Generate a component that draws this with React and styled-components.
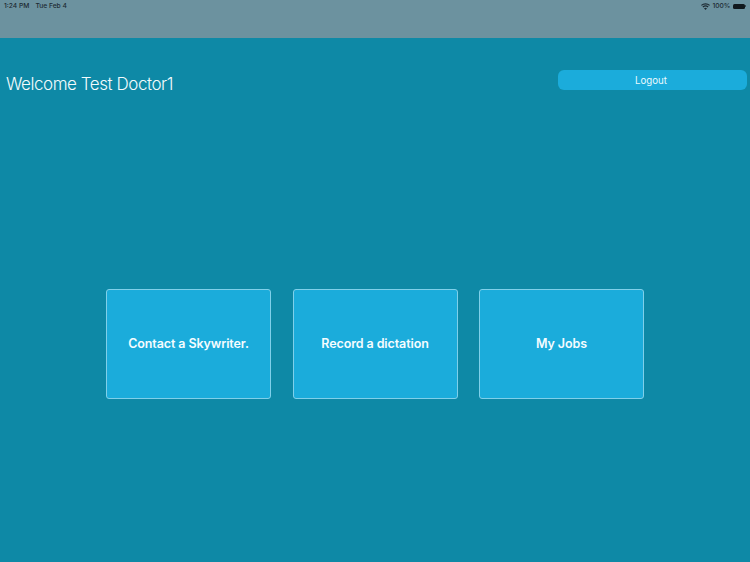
import React from "react";
import styled, { createGlobalStyle } from "styled-components";

const Global = createGlobalStyle`
  html, body { margin: 0; padding: 0; background: #0e89a6; }
  * { box-sizing: border-box; }
`;

const Page = styled.div`
  width: 750px;
  height: 562px;
  overflow: hidden;
  display: flex;
  flex-direction: column;
  background: #0e89a6;
  font-family: Inter, "Liberation Sans", sans-serif;
  color: #fff;
`;

const StatusBar = styled.div`
  height: 38px;
  flex: none;
  background: #6c929f;
  color: #1d2b33;
  font-size: 6.7px;
  font-weight: 500;
  display: flex;
  justify-content: space-between;
  align-items: flex-start;
  padding: 2px 4px 0 4px;
  line-height: 8px;
`;

const StatusGroup = styled.div`
  display: flex;
  align-items: center;
  gap: ${p => p.$gap}px;
`;

const Battery = styled.div`
  position: relative;
  width: 12px;
  height: 5px;
  margin-right: 1px;
  border-radius: 1.5px;
  background: #10181d;

  &::after {
    content: "";
    position: absolute;
    top: 1.5px;
    right: -1px;
    width: 1px;
    height: 2px;
    background: #3a4a52;
  }
`;

const Header = styled.div`
  display: flex;
  justify-content: space-between;
  align-items: flex-start;
  padding: 32px 3px 0 6px;
`;

const Welcome = styled.div`
  font-size: 17px;
  font-weight: 300;
  line-height: 28px;
  letter-spacing: -0.45px;
  color: #f2fbfd;
`;

const Logout = styled.div`
  width: 189px;
  height: 20px;
  padding: 1px 3px 0 0;
  border-radius: 6px;
  background: #1bacdb;
  color: #eafaff;
  font-size: 9.7px;
  font-weight: 400;
  display: flex;
  align-items: center;
  justify-content: center;
`;

const Tiles = styled.div`
  display: flex;
  justify-content: center;
  gap: 21.5px;
  margin-top: 191px;
`;

const Tile = styled.div`
  width: 165px;
  height: 110px;
  padding-bottom: 2px;
  border: 1px solid #7fd0ea;
  border-radius: 3px;
  background: #1bacdb;
  display: flex;
  align-items: center;
  justify-content: center;
  font-size: 12.5px;
  font-weight: 600;
  letter-spacing: -0.1px;
  color: #f5fcff;
`;

const Wifi = () => (
  <svg width="9" height="7" viewBox="0 0 18 14" fill="#1d2b33">
    <path d="M9 14 L6 10.6 A4.5 4.5 0 0 1 12 10.6 Z" />
    <path d="M4.6 9 L2.9 7.1 A9 9 0 0 1 15.1 7.1 L13.4 9 A6.6 6.6 0 0 0 4.6 9 Z" />
    <path d="M1.6 5.7 L0 3.9 A13 13 0 0 1 18 3.9 L16.4 5.7 A10.8 10.8 0 0 0 1.6 5.7 Z" />
  </svg>
);

export default function App() {
  return (
    <Page>
      <Global />
      <StatusBar>
        <StatusGroup $gap={6}>
          <span>1:24 PM</span>
          <span>Tue Feb 4</span>
        </StatusGroup>
        <StatusGroup $gap={2.5}>
          <Wifi />
          <span>100%</span>
          <Battery />
        </StatusGroup>
      </StatusBar>
      <Header>
        <Welcome>Welcome Test Doctor1</Welcome>
        <Logout>Logout</Logout>
      </Header>
      <Tiles>
        <Tile>Contact a Skywriter.</Tile>
        <Tile>Record a dictation</Tile>
        <Tile>My Jobs</Tile>
      </Tiles>
    </Page>
  );
}
